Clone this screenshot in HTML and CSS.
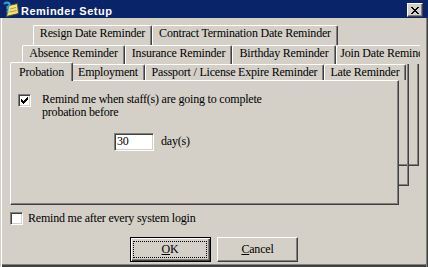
FILE: index.html
```html
<!DOCTYPE html>
<html lang="en">
<head>
  <meta charset="UTF-8" />
  <title>Reminder Setup</title>
  <link rel="stylesheet" href="styles.css">
</head>
<body>
  <div class="window">
    <div class="titlebar">
      <svg class="app-icon" width="16" height="16" viewBox="0 0 16 16">
        <path d="M5.5 4.5 L14.5 2.5 L15.5 12.5 L3.5 15.5 Z" fill="#f2e27a" stroke="#4a4a30"/>
        <path d="M7 8 L13 6.5 M6.5 11 L13.5 9.5" stroke="#b09a40"/>
        <path d="M1 3 Q3 0.5 6 2 Q7.5 4.5 4.5 6 L4.5 8.5" fill="none" stroke="#2aa8d8" stroke-width="2"/>
        <rect x="3.5" y="9.5" width="2" height="2" fill="#2aa8d8"/>
      </svg>
      <span class="title">Reminder Setup</span>
      <button class="close" title="Close">
        <svg width="8" height="7" viewBox="0 0 8 7" shape-rendering="crispEdges">
          <rect x="0" y="0" width="2" height="1"/><rect x="6" y="0" width="2" height="1"/>
          <rect x="1" y="1" width="2" height="1"/><rect x="5" y="1" width="2" height="1"/>
          <rect x="2" y="2" width="4" height="1"/>
          <rect x="3" y="3" width="2" height="1"/>
          <rect x="2" y="4" width="4" height="1"/>
          <rect x="1" y="5" width="2" height="1"/><rect x="5" y="5" width="2" height="1"/>
          <rect x="0" y="6" width="2" height="1"/><rect x="6" y="6" width="2" height="1"/>
        </svg>
      </button>
    </div>

    <div class="client">
      <div class="tabctl">
        <!-- back rows -->
        <div class="tabrow row1">
          <div class="tab t-resign">Resign Date Reminder</div>
          <div class="tab t-contract">Contract Termination Date Reminder</div>
        </div>
        <div class="tabrow row2">
          <div class="tab t-absence">Absence Reminder</div>
          <div class="tab t-insurance">Insurance Reminder</div>
          <div class="tab t-birthday">Birthday Reminder</div>
          <div class="tab t-join">Join Date Reminder</div>
        </div>

        <div class="stack">
          <div class="sheet sheet3"></div>
          <div class="sheet sheet2"></div>
          <div class="front">
            <div class="tabrow row3">
              <div class="tab t-probation active">Probation</div>
              <div class="tab t-employment">Employment</div>
              <div class="tab t-passport">Passport / License Expire Reminder</div>
              <div class="tab t-late">Late Reminder</div>
            </div>
            <div class="panel">
              <div class="opt">
                <span class="check">
                  <svg width="7" height="7" viewBox="0 0 7 7" shape-rendering="crispEdges">
                    <rect x="6" y="0" width="1" height="1"/>
                    <rect x="5" y="1" width="2" height="1"/>
                    <rect x="0" y="2" width="1" height="1"/><rect x="4" y="2" width="3" height="1"/>
                    <rect x="0" y="3" width="2" height="1"/><rect x="3" y="3" width="3" height="1"/>
                    <rect x="0" y="4" width="5" height="1"/>
                    <rect x="1" y="5" width="3" height="1"/>
                    <rect x="2" y="6" width="1" height="1"/>
                  </svg>
                </span>
                <span class="opt-label">Remind me when staff(s) are going to complete<br>probation before</span>
              </div>
              <div class="days">
                <input class="field" type="text" value="30">
                <span class="unit">day(s)</span>
              </div>
            </div>
          </div>
        </div>
      </div>

      <div class="opt login">
        <span class="check"></span>
        <span class="login-label">Remind me after every system login</span>
      </div>

      <div class="buttons">
        <button class="btn default"><span class="focus"><u>O</u>K</span></button>
        <button class="btn"><u>C</u>ancel</button>
      </div>
    </div>
  </div>
</body>
</html>
```

FILE: styles.css
```css
body {
  margin: 0;
  font-family: "Liberation Serif", "DejaVu Serif", serif;
  font-size: 12px;
  letter-spacing: -0.2px;
  color: #000;
  background-color: #d4d0c8;
}
.window {
  width: 428px;
  height: 267px;
  background-color: #d4d0c8;
}
.titlebar {
  height: 18px;
  background-color: #0a246a;
  display: flex;
  align-items: flex-start;
}
.app-icon {
  flex: none;
  margin: 1px 0 0 3px;
}
.title {
  margin: 3px 0 0 2px;
  font-family: "Liberation Sans", Arial, sans-serif;
  font-weight: bold;
  font-size: 11px;
  line-height: 16px;
  letter-spacing: 0.5px;
  color: #fff;
}
.close {
  box-sizing: border-box;
  width: 16px;
  height: 14px;
  margin: 3px 5px 0 auto;
  padding: 0;
  background-color: #d4d0c8;
  border: 1px solid;
  border-color: #fff #404040 #404040 #fff;
  box-shadow: inset -1px -1px 0 #808080;
  display: flex;
  align-items: center;
  justify-content: center;
}
.close svg {
  display: block;
}

.client {
  height: 249px;
  box-sizing: border-box;
  padding-top: 7px;
  box-shadow: inset 1px 0 0 #d4d0c8, inset 2px 0 0 #fff,
    inset -1px 0 0 #404040, inset -2px 0 0 #808080,
    inset 0 -2px 0 #404040, inset 0 -3px 0 #808080;
}

/* tab control */
.tabctl {
  width: 420px;
}
.tabrow {
  display: flex;
}
.row1 {
  height: 20px;
  padding-left: 33px;
  overflow: hidden;
}
.row2 {
  height: 19px;
  padding-left: 22px;
  overflow: hidden;
}
.row3 {
  height: 16px;
  padding-left: 12px;
}
.tab {
  box-sizing: border-box;
  flex: none;
  padding-top: 1px;
  line-height: 13px;
  text-align: center;
  white-space: nowrap;
  background-color: #d4d0c8;
  border-top: 1px solid #fff;
  border-left: 1px solid #fff;
  border-right: 1px solid #404040;
  border-radius: 2px 2px 0 0;
  box-shadow: inset -1px 0 0 #808080;
}
.tab.active {
  position: relative;
  z-index: 1;
  align-self: flex-start;
  height: 19px;
  margin: -2px -2px 0 -2px;
  padding-top: 3px;
}
.t-resign { width: 119px; }
.t-contract { width: 186px; }
.t-absence { width: 103px; }
.t-insurance { width: 107px; }
.t-birthday { width: 104px; }
.t-join { width: 101px; }
.t-probation { width: 63px; }
.t-employment { width: 74px; }
.t-passport { width: 179px; }
.t-late { width: 82px; }

.stack {
  display: grid;
}
.stack > * {
  grid-area: 1 / 1;
}
.sheet {
  box-sizing: border-box;
  width: 389px;
  border-right: 1px solid #404040;
  border-bottom: 1px solid #404040;
  box-shadow: inset -1px -1px 0 #808080;
}
.sheet3 {
  margin-left: 30px;
  height: 102px;
}
.sheet2 {
  margin-left: 20px;
  height: 122px;
}
.front {
  display: flex;
  flex-direction: column;
}
.panel {
  box-sizing: border-box;
  width: 389px;
  height: 125px;
  margin-left: 10px;
  padding: 12px 0 0 7px;
  background-color: #d4d0c8;
  border-top: 1px solid #fff;
  border-left: 1px solid #fff;
  border-right: 1px solid #404040;
  border-bottom: 1px solid #404040;
  box-shadow: inset -1px -1px 0 #808080;
}

/* options */
.opt {
  display: flex;
  align-items: flex-start;
}
.check {
  box-sizing: border-box;
  flex: none;
  width: 13px;
  height: 13px;
  padding: 2px;
  background-color: #fff;
  border: 1px solid;
  border-color: #808080 #fff #fff #808080;
  box-shadow: inset 1px 1px 0 #404040, inset -1px -1px 0 #d4d0c8;
}
.check svg {
  display: block;
}
.panel .check {
  margin-top: 1px;
}
.opt-label {
  margin-left: 11px;
  line-height: 13px;
}
.days {
  display: flex;
  align-items: baseline;
  margin: 14px 0 0 96px;
}
.field {
  box-sizing: border-box;
  width: 40px;
  height: 18px;
  margin: 0;
  padding: 0 0 2px 2px;
  font: inherit;
  letter-spacing: inherit;
  color: #000;
  background-color: #fff;
  border: 1px solid;
  border-color: #808080 #fff #fff #808080;
  box-shadow: inset 1px 1px 0 #404040, inset -1px -1px 0 #d4d0c8;
  outline: none;
}
.unit {
  margin-left: 7px;
}
.login {
  margin: 7px 0 0 10px;
}
.login-label {
  margin-left: 5px;
  line-height: 13px;
}

/* buttons */
.buttons {
  display: flex;
  gap: 6px;
  margin: 12px 0 0 130px;
}
.btn {
  box-sizing: border-box;
  width: 81px;
  height: 25px;
  padding: 0;
  font: inherit;
  letter-spacing: inherit;
  color: #000;
  background-color: #d4d0c8;
  border: 1px solid;
  border-color: #fff #404040 #404040 #fff;
  box-shadow: inset -1px -1px 0 #808080;
  display: flex;
  align-items: center;
  justify-content: center;
}
.btn.default {
  padding: 3px 3px 3px 2px;
  border-color: #000;
  box-shadow: inset 1px 1px 0 #fff, inset -1px -1px 0 #404040, inset -2px -2px 0 #808080;
}
.focus {
  flex: 1;
  align-self: stretch;
  border: 1px dotted #000;
  display: flex;
  align-items: center;
  justify-content: center;
}
```
